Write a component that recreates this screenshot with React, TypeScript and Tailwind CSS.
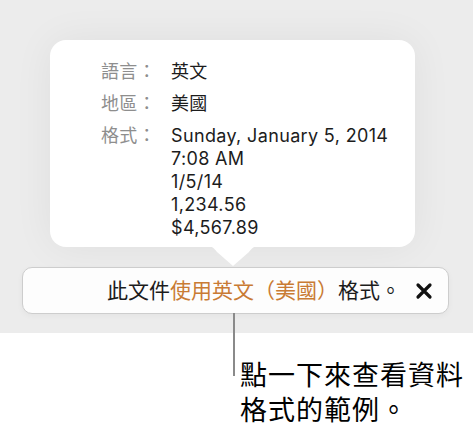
import React from "react";

const font = { fontFamily: '"Inter", "Noto Sans CJK TC", sans-serif' };

function Row({ label, children }: { label: string; children: React.ReactNode }) {
  return (
    <div className="flex">
      <div className="w-[70px] shrink-0 text-[#8e8e8e]">{label}</div>
      <div className="text-[#1c1c1c] whitespace-nowrap">{children}</div>
    </div>
  );
}

export default function App() {
  return (
    <div className="w-[473px] h-[434px] bg-white overflow-hidden" style={font}>
      <div className="h-[333px] bg-[#ececec] pt-[40px] flex flex-col">
        <div className="relative ml-[50px] w-[365px] h-[207px] rounded-[16px] bg-white shadow-[0_0_40px_rgba(0,0,0,0.06)]">
          <svg
            className="absolute left-[153px] top-[205px]"
            width="60"
            height="22"
            viewBox="0 0 60 22"
          >
            <path d="M0 0 H60 C52 0 49 3 46 7 L30 21 L14 7 C11 3 8 0 0 0 Z" fill="white" />
          </svg>
          <div className="relative pl-[51px] pt-[20px] text-[18px] leading-[23px] tracking-[0.35px] flex flex-col gap-[9px]">
            <Row label="語言：">英文</Row>
            <Row label="地區：">美國</Row>
            <Row label="格式：">
              <div>Sunday, January 5, 2014</div>
              <div>7:08 AM</div>
              <div>1/5/14</div>
              <div>1,234.56</div>
              <div>$4,567.89</div>
            </Row>
          </div>
        </div>
        <div className="relative z-10 mt-[20px] ml-[22px] w-[427px] h-[47px] rounded-[10px] border border-[#cdcdcd] bg-[#fdfdfd] shadow-[0_2px_6px_rgba(0,0,0,0.04)] flex items-center justify-end pr-[15px]">
          <div className="text-[21px] leading-[26px] text-[#1c1c1c] whitespace-nowrap">
            此文件<span className="text-[#c97b34]">使用英文（美國）</span>格式。
          </div>
          <svg className="ml-[14px]" width="18" height="18" viewBox="0 0 18 18">
            <path d="M3 3 L15 15 M15 3 L3 15" stroke="#111" strokeWidth="3.2" strokeLinecap="round" />
          </svg>
          <div className="absolute left-[210px] top-full w-[2px] h-[63px] bg-[#8a8a8a]" />
        </div>
      </div>
      <div className="pl-[240px] pt-[25px] text-[27px] leading-[35px] tracking-[1px] text-black">
        <div>點一下來查看資料</div>
        <div>格式的範例。</div>
      </div>
    </div>
  );
}
